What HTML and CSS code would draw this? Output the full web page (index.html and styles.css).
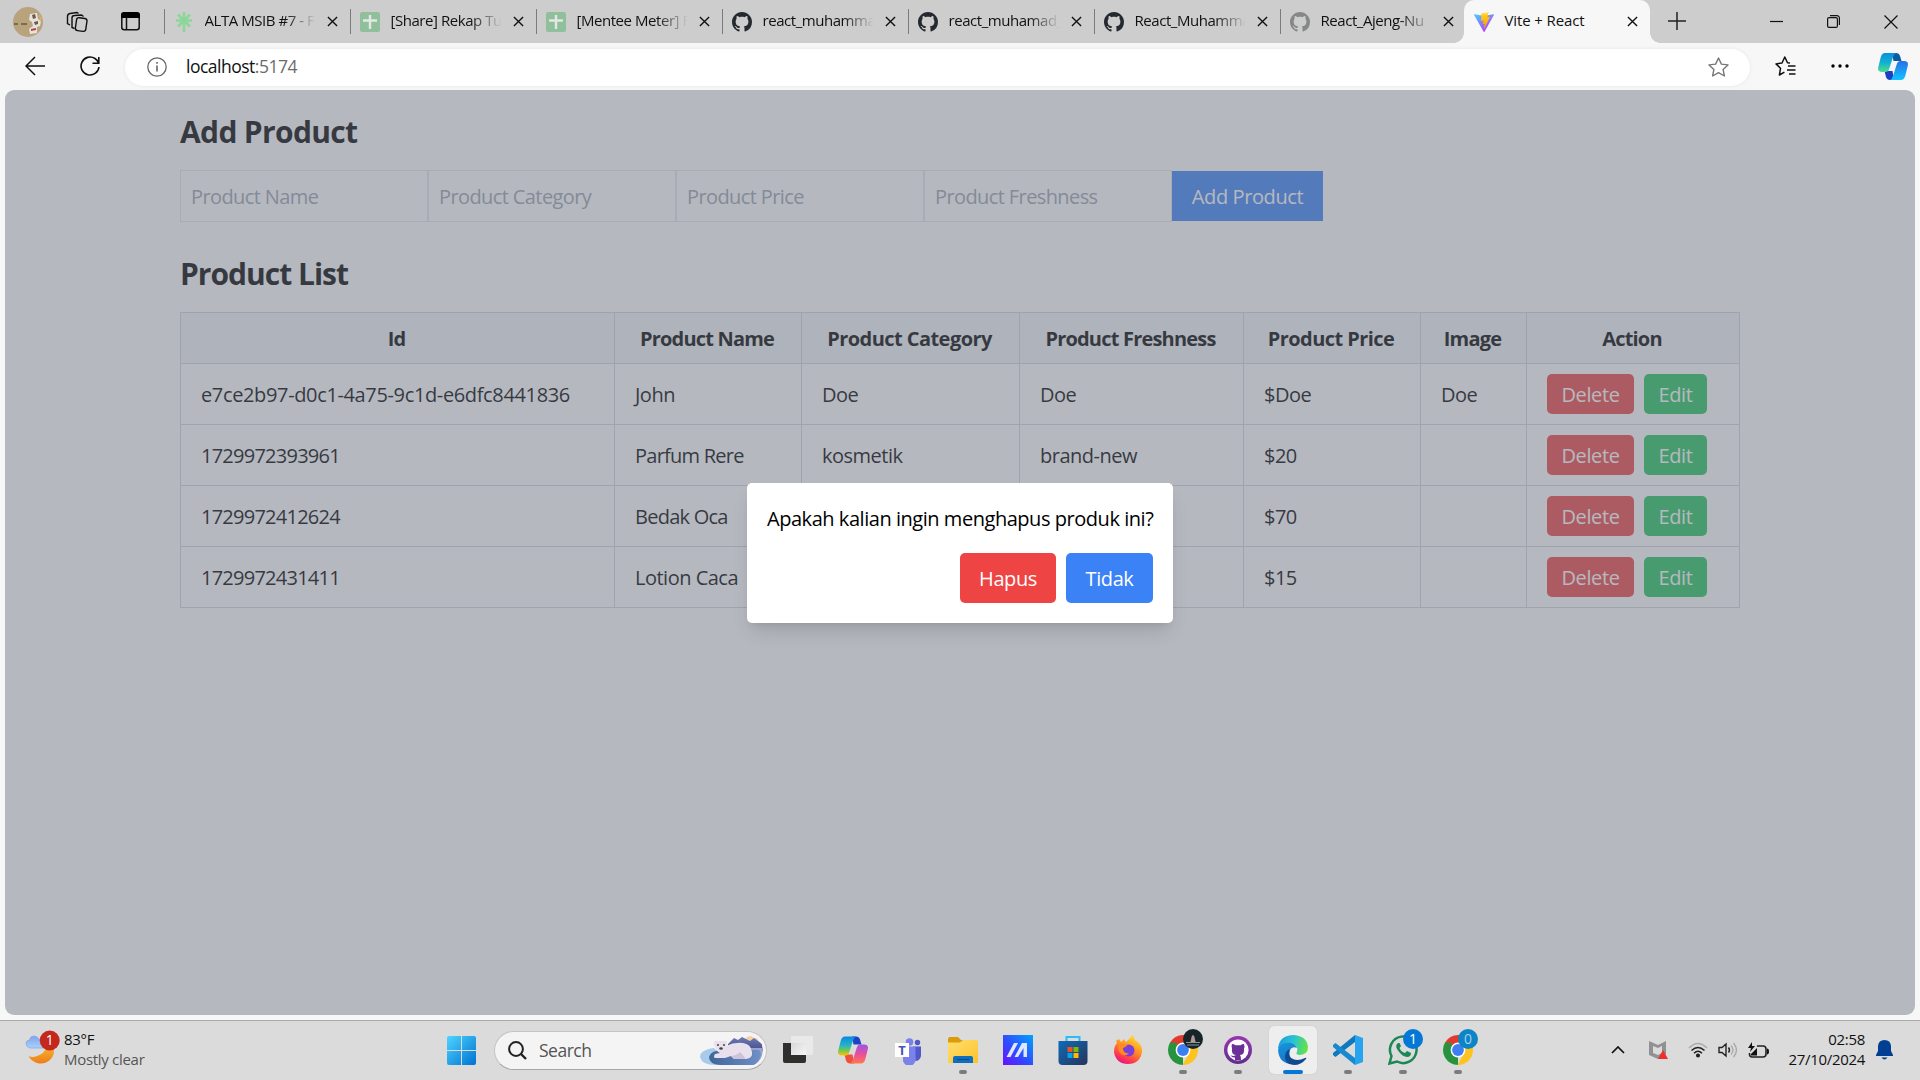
FILE: index.html
```html
<!DOCTYPE html>
<html lang="id">
<head>
<meta charset="utf-8">
<title>Vite + React</title>
<link rel="stylesheet" href="styles.css">
</head>
<body>
<svg class="defs" width="0" height="0" aria-hidden="true">
  <defs>
    <linearGradient id="gStart" x1="0" y1="0" x2="1" y2="1"><stop offset="0" stop-color="#4fd4ff"/><stop offset="1" stop-color="#0072d2"/></linearGradient>
    <linearGradient id="gVite" x1="0" y1="0" x2=".7" y2="1"><stop offset="0" stop-color="#41d1ff"/><stop offset="1" stop-color="#bd34fe"/></linearGradient>
    <linearGradient id="gBolt" x1="0" y1="0" x2="0" y2="1"><stop offset="0" stop-color="#ffea83"/><stop offset=".2" stop-color="#ffcb1c"/><stop offset="1" stop-color="#ff9800"/></linearGradient>
    <linearGradient id="gCopA" x1="0" y1="0" x2="0" y2="1"><stop offset="0" stop-color="#0f86e4"/><stop offset=".45" stop-color="#22b3c9"/><stop offset=".75" stop-color="#7ac84a"/><stop offset="1" stop-color="#ffc400"/></linearGradient>
    <linearGradient id="gCopB" x1="0" y1="0" x2="0" y2="1"><stop offset="0" stop-color="#9c53e6"/><stop offset=".55" stop-color="#ee5097"/><stop offset="1" stop-color="#ff7a4a"/></linearGradient>
    <linearGradient id="gCopC" x1="0" y1="0" x2="0" y2="1"><stop offset="0" stop-color="#0a8fe0"/><stop offset=".5" stop-color="#12b0d0"/><stop offset="1" stop-color="#4ede8f"/></linearGradient>
    <linearGradient id="gCopD" x1="0" y1="0" x2="0" y2="1"><stop offset="0" stop-color="#2a6fe6"/><stop offset="1" stop-color="#12c4ff"/></linearGradient>
    <linearGradient id="gMoon" x1="0" y1="0" x2="0" y2="1"><stop offset="0" stop-color="#f7b52e"/><stop offset="1" stop-color="#ee7d1b"/></linearGradient>
    <linearGradient id="gCloud" x1="0" y1="0" x2="0" y2="1"><stop offset="0" stop-color="#7fa5ee"/><stop offset="1" stop-color="#a9d0fb"/></linearGradient>
    <linearGradient id="gFolder" x1="0" y1="0" x2="1" y2="1"><stop offset="0" stop-color="#ffdf70"/><stop offset="1" stop-color="#fcc22a"/></linearGradient>
    <linearGradient id="gAsus" x1="1" y1="0" x2="0" y2="1"><stop offset="0" stop-color="#00a2ff"/><stop offset=".55" stop-color="#2f4bff"/><stop offset="1" stop-color="#6a10ff"/></linearGradient>
    <linearGradient id="gStore" x1="0" y1="0" x2="1" y2="1"><stop offset="0" stop-color="#0d6cb8"/><stop offset="1" stop-color="#27335c"/></linearGradient>
    <linearGradient id="gFox" x1=".8" y1="0" x2=".3" y2="1"><stop offset="0" stop-color="#ffe53b"/><stop offset=".45" stop-color="#ff9422"/><stop offset=".8" stop-color="#ff3750"/><stop offset="1" stop-color="#e31587"/></linearGradient>
    <linearGradient id="gGit" x1="0" y1="0" x2="0" y2="1"><stop offset="0" stop-color="#9a35b0"/><stop offset="1" stop-color="#5f2f8e"/></linearGradient>
    <linearGradient id="gEdgeT" x1="0" y1=".3" x2="1" y2=".5"><stop offset="0" stop-color="#1b9de2"/><stop offset=".5" stop-color="#2cc3d0"/><stop offset="1" stop-color="#66e344"/></linearGradient>
    <linearGradient id="gEdgeL" x1="0" y1="0" x2=".4" y2="1"><stop offset="0" stop-color="#1a94dd"/><stop offset="1" stop-color="#1476c8"/></linearGradient>
    <linearGradient id="gGlass" x1="0" y1="0" x2="1" y2="1"><stop offset="0" stop-color="#d4d4d4"/><stop offset="1" stop-color="#fafafa"/></linearGradient>
    <linearGradient id="gHill" x1="0" y1="0" x2="0" y2="1"><stop offset="0" stop-color="#6d7bb4"/><stop offset="1" stop-color="#434d8e"/></linearGradient>
    <linearGradient id="gWater" x1="0" y1="0" x2="1" y2="0"><stop offset="0" stop-color="#3f6699"/><stop offset="1" stop-color="#6f8fc8"/></linearGradient>
  </defs>
  <symbol id="close" viewBox="0 0 12 12"><path d="M1 1l10 10M11 1L1 11" fill="none" stroke="#111" stroke-width="1.5"/></symbol>
  <symbol id="sheet" viewBox="0 0 20 20"><rect width="20" height="20" rx="2" fill="#8fbf9b"/><path d="M10 3v14M3 8.5h14" stroke="#e4e8e5" stroke-width="2.4"/></symbol>
  <symbol id="github" viewBox="0 0 16 16"><path d="M8 0C3.58 0 0 3.58 0 8c0 3.54 2.29 6.53 5.47 7.59.4.07.55-.17.55-.38 0-.19-.01-.82-.01-1.49-2.01.37-2.53-.49-2.69-.94-.09-.23-.48-.94-.82-1.13-.28-.15-.68-.52-.01-.53.63-.01 1.08.58 1.23.82.72 1.21 1.87.87 2.33.66.07-.52.28-.87.51-1.07-1.78-.2-3.64-.89-3.64-3.95 0-.87.31-1.59.82-2.15-.08-.2-.36-1.02.08-2.12 0 0 .67-.21 2.2.82.64-.18 1.32-.27 2-.27s1.36.09 2 .27c1.53-1.04 2.2-.82 2.2-.82.44 1.1.16 1.92.08 2.12.51.56.82 1.27.82 2.15 0 3.07-1.87 3.75-3.65 3.95.29.25.54.73.54 1.48 0 1.07-.01 1.93-.01 2.2 0 .21.15.46.55.38A8.01 8.01 0 0 0 16 8c0-4.42-3.58-8-8-8z"/></symbol>
  <symbol id="chrome" viewBox="0 0 30 30">
    <path d="M15 15L2.01 7.5A15 15 0 0 1 27.99 7.5z" fill="#e23a2e"/>
    <path d="M15 15L15 30A15 15 0 0 1 2.01 7.5z" fill="#27933f"/>
    <path d="M21 18.5L14.5 30A15 15 0 0 0 28.3 8H15z" fill="#fdc31e"/>
    <path d="M9 18.5L2 7.5 9 8z" fill="#27933f"/>
    <circle cx="15" cy="15" r="7.4" fill="#fff"/><circle cx="15" cy="15" r="5.9" fill="#3c7ff0"/>
  </symbol>
</svg>

<header class="tabs">
  <div class="tabs-tools">
    <svg width="30" height="30" viewBox="0 0 30 30"><circle cx="15" cy="15" r="15" fill="#b9a37d"/><path d="M17 7l7-1 1 6 3 2-1 5-3 1v6l-7 1-1-5 4-3-1-4-3-2z" fill="#e4e3df"/><path d="M19 8l3-1 1 4-3 1zM21 15l4-1v3l-3 1z" fill="#6c5a45"/><path d="M26 7l3 5-2 3z" fill="#d9b45c"/><path d="M18 22l5-1v2l-5 1z" fill="#b5433c"/><path d="M1 17h4M8 17h6" stroke="#6a5a3c" stroke-width="1.300"/></svg>
    <svg width="22" height="22" viewBox="0 0 22 22" fill="none" stroke="#111" stroke-width="1.400"><rect x="10" y="7" width="10.500" height="13" rx="2.500" transform="rotate(8 15 13)"/><path d="M8.500 17.500L6 16.500V7a2.500 2.500 0 0 1 2.500-2.500l7-.5 2 1.500M4 14L1.500 12.500V5.500A3 3 0 0 1 4 2.500l7-1 1.500 1"/></svg>
    <svg width="19" height="19" viewBox="0 0 19 19"><rect x=".8" y="1.200" width="17.400" height="16.500" rx="2.500" fill="none" stroke="#111" stroke-width="1.500"/><path d="M0 6V3a3 3 0 0 1 3-3h13a3 3 0 0 1 3 3v3z"/><path d="M5.500 6v12" stroke="#111" stroke-width="1.500"/></svg>
  </div>
  <div class="tab"><svg class="fav" viewBox="0 0 20 20"><path d="M10 0v20M2 8.500h16M4 2.500l12 12M16 2.500l-12 12" stroke="#8bd79b" stroke-width="2.700"/></svg><span class="title">ALTA MSIB #7 - F</span><svg class="x"><use href="#close"/></svg></div>
  <div class="tab"><svg class="fav"><use href="#sheet"/></svg><span class="title">[Share] Rekap Tu</span><svg class="x"><use href="#close"/></svg></div>
  <div class="tab"><svg class="fav"><use href="#sheet"/></svg><span class="title">[Mentee Meter] F</span><svg class="x"><use href="#close"/></svg></div>
  <div class="tab"><svg class="fav gh"><use href="#github"/></svg><span class="title">react_muhamma</span><svg class="x"><use href="#close"/></svg></div>
  <div class="tab"><svg class="fav gh"><use href="#github"/></svg><span class="title">react_muhamad_</span><svg class="x"><use href="#close"/></svg></div>
  <div class="tab"><svg class="fav gh"><use href="#github"/></svg><span class="title">React_Muhamma</span><svg class="x"><use href="#close"/></svg></div>
  <div class="tab last"><svg class="fav gh pale"><use href="#github"/></svg><span class="title">React_Ajeng-Nu</span><svg class="x"><use href="#close"/></svg></div>
  <div class="tab active"><svg class="fav" viewBox="0 0 256 257"><path fill="url(#gVite)" d="M255.153 37.938L134.897 252.976c-2.483 4.44-8.862 4.466-11.382.048L.875 37.958c-2.746-4.814 1.371-10.646 6.827-9.67l120.385 21.517a6.537 6.537 0 0 0 2.322-.004l117.867-21.483c5.438-.991 9.574 4.796 6.877 9.62Z"/><path fill="url(#gBolt)" d="M185.432.063L96.44 17.501a3.268 3.268 0 0 0-2.634 3.014l-5.474 92.456a3.268 3.268 0 0 0 3.997 3.378l24.777-5.718c2.318-.535 4.413 1.507 3.936 3.838l-7.361 36.047c-.495 2.426 1.782 4.5 4.151 3.78l15.304-4.649c2.372-.72 4.652 1.36 4.15 3.788l-11.698 56.621c-.732 3.542 3.979 5.473 5.943 2.437l1.313-2.028l72.516-144.72c1.215-2.423-.88-5.186-3.54-4.672l-25.505 4.922c-2.396.462-4.435-1.77-3.759-4.114l16.646-57.705c.677-2.35-1.37-4.583-3.769-4.113Z"/></svg><span class="title">Vite + React</span><svg class="x"><use href="#close"/></svg></div>
  <svg class="plus" width="18" height="18" viewBox="0 0 18 18"><path d="M9 0v18M0 9h18" stroke="#222" stroke-width="1.500"/></svg>
  <div class="window-buttons">
    <svg width="13" height="13" viewBox="0 0 13 13"><path d="M0 6.500h13" stroke="#111" stroke-width="1.200"/></svg>
    <svg width="13" height="13" viewBox="0 0 13 13" fill="none" stroke="#111" stroke-width="1.200"><rect x=".6" y="2.600" width="9.800" height="9.800" rx="1.500"/><path d="M3 .6h7a2.400 2.400 0 0 1 2.400 2.400v7"/></svg>
    <svg width="14" height="14" viewBox="0 0 14 14"><path d="M.5.5l13 13M13.500.5L.5 13.500" stroke="#111" stroke-width="1.200"/></svg>
  </div>
</header>

<nav class="toolbar">
  <svg width="20" height="20" viewBox="0 0 20 20" fill="none" stroke="#111" stroke-width="1.500"><path d="M20 10H1M10 1L1 10l9 9"/></svg>
  <svg class="reload" width="20" height="20" viewBox="0 0 20 20" fill="none" stroke="#111" stroke-width="1.600"><path d="M19 11A9 9 0 1 1 15 2.500Q17.500 4 18.500 7M18.800 1v6.300h-6.300"/></svg>
  <div class="address">
    <svg width="20" height="20" viewBox="0 0 20 20" fill="none" stroke="#666" stroke-width="1.300"><circle cx="10" cy="10" r="9.200"/><path d="M10 8.500v6M10 5v1.700" stroke-width="1.600"/></svg>
    <span class="url">localhost<span class="port">:5174</span></span>
    <svg width="21" height="20" viewBox="0 0 21 20"><path d="M10.500 1l2.900 6.100 6.600.8-4.900 4.500 1.300 6.600-5.900-3.300L4.600 19l1.300-6.600L1 7.900l6.600-.8z" fill="none" stroke="#777" stroke-width="1.400" stroke-linejoin="round"/></svg>
  </div>
  <svg class="favs" width="21" height="20" viewBox="0 0 21 20" fill="none" stroke="#111" stroke-width="1.500" stroke-linejoin="round"><path d="M15 7l-2.500-.2L9.800 1 7 7l-6 .9 4.500 4.400L4.400 19l5-2.800M13 10h7.500M12 14h8.500M14 18h6.500"/></svg>
  <svg class="dots" width="18" height="4" viewBox="0 0 18 4"><circle cx="2" cy="2" r="1.700"/><circle cx="9" cy="2" r="1.700"/><circle cx="16" cy="2" r="1.700"/></svg>
  <svg class="copilot" width="30" height="27" viewBox="0 0 30 27"><path d="M14 0h4q3 0 4 3l1.500 5h-8z" fill="#0a5c9e"/><path d="M16 27h-4q-3 0-4-3l-1.500-6h8z" fill="#1c3fc4"/><path d="M7 0h11q-2 1-3 4l-3.500 11q-1 4-4 4H4q-5 0-3.700-5l2.200-9Q3.700 0 7 0z" fill="url(#gCopC)"/><path d="M23 27H12q2-1 3-4l3.500-11q1-4 4-4H26q5 0 3.700 5l-2.200 9q-1.200 5-4.500 5z" fill="url(#gCopD)"/></svg>
</nav>

<main class="page">
  <div class="container">
    <h1>Add Product</h1>
    <form class="product-form">
      <input placeholder="Product Name"><input placeholder="Product Category"><input placeholder="Product Price"><input placeholder="Product Freshness">
      <button type="button" class="add">Add Product</button>
    </form>
    <h1 class="list-title">Product List</h1>
    <table>
      <colgroup><col class="c-id"><col class="c-name"><col class="c-cat"><col class="c-fresh"><col class="c-price"><col class="c-image"><col></colgroup>
      <thead><tr><th>Id</th><th>Product Name</th><th class="wide">Product Category</th><th>Product Freshness</th><th class="wide">Product Price</th><th>Image</th><th>Action</th></tr></thead>
      <tbody>
        <tr><td class="uuid">e7ce2b97-d0c1-4a75-9c1d-e6dfc8441836</td><td>John</td><td>Doe</td><td>Doe</td><td>$Doe</td><td>Doe</td><td><div class="actions"><button class="delete">Delete</button><button class="edit">Edit</button></div></td></tr>
        <tr><td class="num">1729972393961</td><td class="tight">Parfum Rere</td><td>kosmetik</td><td>brand-new</td><td>$20</td><td></td><td><div class="actions"><button class="delete">Delete</button><button class="edit">Edit</button></div></td></tr>
        <tr><td class="num">1729972412624</td><td class="tight">Bedak Oca</td><td></td><td></td><td>$70</td><td></td><td><div class="actions"><button class="delete">Delete</button><button class="edit">Edit</button></div></td></tr>
        <tr><td class="num">1729972431411</td><td>Lotion Caca</td><td></td><td></td><td>$15</td><td></td><td><div class="actions"><button class="delete">Delete</button><button class="edit">Edit</button></div></td></tr>
      </tbody>
    </table>
  </div>
  <div class="overlay">
    <div class="modal">
      <p>Apakah kalian ingin menghapus produk ini?</p>
      <div class="modal-actions"><button class="yes">Hapus</button><button class="no">Tidak</button></div>
    </div>
  </div>
</main>

<footer class="taskbar">
  <div class="weather">
    <svg width="35" height="36" viewBox="0 0 35 36"><path d="M3.500 26Q7 28 12 26q8-3 9-8l7-2Q31 24 25 30q-6 5-13 3-6-2-8.500-7z" fill="url(#gMoon)"/><path d="M5 18q-4-1-4-4.500Q1 10 4.500 10 5 6 9 6q3 0 5 3 5 0 5 9z" fill="url(#gCloud)" stroke="#7aa0e8" stroke-width=".6"/><circle cx="24.700" cy="10.500" r="10" fill="#c4281c"/><text x="24.700" y="15.300" text-anchor="middle" class="badge-text">1</text></svg>
    <div class="lines"><span>83°F</span><span class="dim">Mostly clear</span></div>
  </div>
  <svg class="start" width="29" height="29" viewBox="0 0 29 29"><path d="M0 2Q0 0 2 0h12v14H0zM15 0h12q2 0 2 2v12H15zM0 15h14v14H2q-2 0-2-2zM15 15h14v12q0 2-2 2H15z" fill="url(#gStart)"/></svg>
  <div class="search">
    <svg width="19" height="19" viewBox="0 0 19 19" fill="none" stroke="#222"><circle cx="8" cy="8" r="6.900" stroke-width="2"/><path d="M13 13l5 5" stroke-width="2.400"/></svg>
    <span>Search</span>
    <svg class="bear" width="63" height="31" viewBox="0 0 63 31"><path d="M46 3q4-4 8 0h3l4 8v8H40z" fill="#f6cfa4"/><path d="M28 9l6-6 4 2 4-3 8 4 4-3 8 6 1 7H28z" fill="url(#gHill)"/><path d="M28 13h35q0 12-8 17H30z" fill="#9da3c6"/><path d="M14 13Q0 15 0 22q2 8 15 8h10l-6-12z" fill="#a8cbea"/><path d="M9 22q2-7 14-7h36q5 5-4 15H20Q9 29 9 22z" fill="url(#gWater)"/><path d="M16 13q-3-3-2-6 1-2 3-1h6q3-1 4 1 0 2-1 4 8-4 17-3 8 1 9 9 1 6-6 7H34q-2-2-3-3l-6 2H15q-2-1 0-4l5-1q-4-2-4-5z" fill="#e9e0ee"/><path d="M31 21q6-1 9-4 6 6 5 7H34z" fill="#cfc3dc"/><circle cx="18" cy="10" r=".9" fill="#333"/><circle cx="24" cy="10" r=".9" fill="#333"/><ellipse cx="21" cy="13.500" rx="1.800" ry="1.200" fill="#444"/></svg>
  </div>
  <div class="apps">
    <div class="app"><svg viewBox="0 0 30 30"><path d="M0 8h23v18q0 2-2 2H2q-2 0-2-2z" fill="#2f2f2e"/><path d="M8 1h22v17q0 2-2 2H8z" fill="#e9e9e9"/><path d="M8 8h15v12H8z" fill="url(#gGlass)" opacity=".8"/></svg></div>
    <div class="app"><svg viewBox="0 0 30 27"><path d="M14 0h4q3 0 4 3l1.500 5h-8z" fill="#1c42c8"/><path d="M16 27h-4q-3 0-4-3l-1.500-6h8z" fill="#f0503c"/><path d="M7 0h11q-2 1-3 4l-3.500 11q-1 4-4 4H4q-5 0-3.700-5l2.200-9Q3.700 0 7 0z" fill="url(#gCopA)"/><path d="M23 27H12q2-1 3-4l3.500-11q1-4 4-4H26q5 0 3.700 5l-2.200 9q-1.200 5-4.500 5z" fill="url(#gCopB)"/></svg></div>
    <div class="app"><svg viewBox="0 0 30 30"><circle cx="16.500" cy="7" r="3.800" fill="#7b83eb"/><circle cx="24.500" cy="7.500" r="2.700" fill="#5059c9"/><path d="M20 11.500h8V21q-1 5-6 5z" fill="#5059c9"/><path d="M10 11.500h12.500V22a6.500 7 0 0 1-12.500 4z" fill="#7b83eb"/><rect x="2" y="8" width="14" height="14" fill="#fff"/><text x="9" y="19.500" text-anchor="middle" class="teams-text">T</text></svg></div>
    <div class="app run"><svg viewBox="0 0 30 30"><path d="M0 4q0-2 2-2h8l3 3h15v8H0z" fill="#dd9a0a"/><path d="M0 7.500h12L15 5h13q2 0 2 2v21H0z" fill="url(#gFolder)"/><path d="M5 28v-5q0-2 2-2h16q2 0 2 2v5z" fill="#0f6fbe"/><path d="M9 24.500h12" stroke="#064a86" stroke-width="1"/></svg></div>
    <div class="app"><svg viewBox="0 0 30 30"><path d="M0 0h30v30H0z" fill="url(#gAsus)"/><path d="M3.500 22L11 8h4L7.500 22zM11.500 22L19 8h5v14h-3.500V13L15 22z" fill="#dce8ff"/></svg></div>
    <div class="app"><svg viewBox="0 0 30 30"><path d="M8.500 7V2h13v5" fill="none" stroke="#29bdf2" stroke-width="2"/><path d="M.5 6h29v20q0 4-4 4h-21q-4 0-4-4z" fill="url(#gStore)"/><path d="M9.500 12h5v5h-5z" fill="#f25022"/><path d="M15.500 12h5v5h-5z" fill="#7fba00"/><path d="M9.500 18h5v5h-5z" fill="#00a4ef"/><path d="M15.500 18h5v5h-5z" fill="#ffb900"/></svg></div>
    <div class="app"><svg viewBox="0 0 30 30"><path d="M3 6l3-2 2 3 3-3 2 3 5-5 2-2 2 5q8 5 7 12-2 12-14 12T1 17q0-6 3-9z" fill="url(#gFox)"/><circle cx="15.500" cy="15.500" r="6" fill="#7a3fd8"/><path d="M6 9q7-1 8 2l-4 2q0 6 6 5-3 4-8 1-4-4-2-10z" fill="#ff8a1e"/></svg></div>
    <div class="app run"><svg><use href="#chrome"/></svg><svg class="badge" viewBox="0 0 20 20"><circle cx="10" cy="10" r="10" fill="#17242a"/><path d="M8.500 8q1.500-4 3 0l1 5h-5z" fill="#b39a94"/><path d="M3 13.500h14M4 16h12" stroke="#87949a" stroke-width="1.200"/></svg></div>
    <div class="app run"><svg viewBox="0 0 30 30"><circle cx="15" cy="15" r="14" fill="url(#gGit)"/><circle cx="15" cy="15" r="10.600" fill="#fff"/><path d="M9 9q2 0 3.500 1.200h5Q19 9 21 9q1 3 0 4.500 1 6-4 6.500 1 1 1 5h-6v-2.500q-3 .5-4.500-2.500 2.500 1.500 4.500.5l1-.5q-5-.5-4-6.500-1-2 0-4.500z" fill="#6b2f96"/></svg></div>
    <div class="app run current"><svg viewBox="0 0 30 30"><path d="M0 14Q1 0 16 0q13 1 14 12 0 8-9 8-4-1-2-3 2-6-5-7.500Q4 8 0 14z" fill="url(#gEdgeT)"/><path d="M0 15q1-6 8-7 8-1 11 5-5-2-7 2-2 7 5 14Q1 30 0 15z" fill="url(#gEdgeL)"/><path d="M12 14q-3 5 1 9 6 4 14 0 2-1 1 1-5 6-12 6-9-1-9-8 0-6 5-8z" fill="#114a91"/></svg></div>
    <div class="app run"><svg viewBox="0 0 30 30"><path d="M22 7L2.500 22 0 20v-2L22 0z" fill="#0f79bd"/><path d="M22 23L2.500 8 0 10v2l22 18z" fill="#1888d0"/><path d="M22 0l8 3v24l-8 3z" fill="#26a4ef"/></svg></div>
    <div class="app run"><svg viewBox="0 0 30 30"><path d="M1.500 28.500l2-7.500A13.300 13.300 0 1 1 9 26.500z" fill="none" stroke="#1a8754" stroke-width="2.500"/><path d="M10 8q-3 2-1 6 4 7 10 8 4 0 4-4l-4-2-2 2q-4-1-5.500-5l1.500-2-1.500-3z" fill="#1a8754"/></svg><svg class="badge" viewBox="0 0 20 20"><circle cx="10" cy="10" r="10" fill="#0578d6"/><text x="10" y="15" text-anchor="middle" class="badge-text">1</text></svg></div>
    <div class="app run"><svg><use href="#chrome"/></svg><svg class="badge" viewBox="0 0 20 20"><circle cx="10" cy="10" r="10" fill="#0d84c6"/><text x="10" y="14.500" text-anchor="middle" class="badge-text soft">0</text></svg></div>
  </div>
  <div class="tray">
    <svg width="14" height="8" viewBox="0 0 14 8"><path d="M1 7l6-6 6 6" fill="none" stroke="#111" stroke-width="1.700"/></svg>
    <svg class="shield" width="19" height="20" viewBox="0 0 19 20"><path d="M0 1l9 4 8-4v13l-8 5-9-4zM4 6v7l5 2 4-2V6l-4 2z" fill="#8f9193" fill-rule="evenodd"/><path d="M14 10l5 9H9z" fill="#ee2f2c"/></svg>
    <svg class="wifi" width="20" height="16" viewBox="0 0 20 16" fill="none" stroke="#222" stroke-width="1.500"><path d="M1 6q9-9 18 0" stroke="#aaa"/><path d="M3.500 8.500q6.500-6 13 0M6 11.200q4-4 8 0"/><circle cx="10" cy="13.500" r="1.300" fill="#222"/></svg>
    <svg class="sound" width="20" height="16" viewBox="0 0 20 16" fill="none" stroke="#222" stroke-width="1.400"><path d="M1 5.500h3L8 2v12l-4-3.500H1zM10.500 5.500q2 2.500 0 5"/><path d="M13 3.500q4 4.500 0 9M15.500 1q6 7 0 14" stroke="#aaa"/></svg>
    <svg class="battery" width="21" height="17" viewBox="0 0 21 17"><path d="M9 4h6q3 0 3 3v5q0 3-3 3H4q-2.500 0-2.500-3V11" fill="none" stroke="#222" stroke-width="1.600"/><path d="M3 13.500V12l6-6v7.500zM4 0L0 6h3l-1 4 5-6H4zM19 6.500q2 0 2 3t-2 3z" fill="#111"/></svg>
    <div class="clock"><span>02:58</span><span>27/10/2024</span></div>
    <svg class="bell" width="17" height="20" viewBox="0 0 17 20"><path d="M8.500 0q6 0 6.500 6v5l2 4v1H0v-1l2-4V6q.5-6 6.500-6zM5.500 17.500h6q-3 4-6 0z" fill="#003f92"/></svg>
  </div>
</footer>
</body>
</html>
```

FILE: styles.css
```css
* { box-sizing: border-box; }
html, body { height: 100%; overflow: hidden; }
body {
  margin: 0;
  display: flex;
  flex-direction: column;
  background: #f7f7f7;
  font-family: "Open Sans", "Noto Sans", sans-serif;
  color: #111;
}
svg { display: block; flex: none; }
.defs { position: absolute; }
button, input { font: inherit; letter-spacing: inherit; border: 0; margin: 0; }

/* tab strip */
.tabs { height: 43px; flex: none; display: flex; background: #cdcdcd; align-items: center; }
.tabs-tools { width: 164px; display: flex; align-items: center; padding-left: 13px; flex: none; }
.tabs-tools svg:nth-child(2) { margin-left: 23px; }
.tabs-tools svg:nth-child(3) { margin-left: 33px; }
.tab {
  position: relative;
  width: 186px;
  height: 43px;
  flex: none;
  display: flex;
  align-items: center;
  padding-left: 9.500px;
}
.tab.last { width: 184px; }
.tab::before { content: ""; position: absolute; left: 0; top: 9px; width: 1px; height: 25px; background: #7b7b7b; }
.fav { width: 20px; height: 20px; }
.gh { fill: #24292f; }
.pale { fill: #858789; }
.title {
  width: 114px;
  margin-left: 11px;
  padding-bottom: 3px;
  white-space: nowrap;
  font-size: 15px;
  letter-spacing: -.45px;
  -webkit-mask-image: linear-gradient(90deg, #000 70%, transparent 97%);
  mask-image: linear-gradient(90deg, #000 70%, transparent 97%);
}
.x { width: 11px; height: 11px; margin-left: 8px; }
.active { background: #f7f7f7; border-radius: 10px 10px 0 0; }
.active .title { -webkit-mask-image: none; mask-image: none; letter-spacing: -.12px; }
.active::before, .active::after {
  content: "";
  position: absolute;
  top: 33px;
  left: -10px;
  width: 10px;
  height: 10px;
  background: radial-gradient(circle at 0 0, transparent 9.500px, #f7f7f7 10px);
}
.active::after { left: auto; right: -10px; background: radial-gradient(circle at 100% 0, transparent 9.500px, #f7f7f7 10px); }
.plus { margin-left: 18px; margin-bottom: 2px; }
.window-buttons { margin-left: auto; display: flex; gap: 44px; padding-right: 22px; }

/* toolbar */
.toolbar { height: 47px; flex: none; display: flex; align-items: center; padding: 0 12px 1px 25px; }
.reload { margin-left: 35px; }
.address {
  width: 1625px;
  height: 37px;
  margin: 2px 0 0 25px;
  display: flex;
  align-items: center;
  padding: 0 21px 0 22px;
  border-radius: 19px;
  background: #fff;
  box-shadow: 0 0 4px rgba(0, 0, 0, .07);
}
.url { flex: 1; margin-left: 19px; padding-bottom: 2px; font-size: 17.500px; letter-spacing: -.5px; }
.port { color: #6b6b6b; }
.favs { margin-left: 25px; }
.dots { margin-left: 35px; }
.copilot { margin-left: auto; }

/* page */
.page {
  position: relative;
  height: 925px;
  flex: none;
  margin: 0 5px 5px;
  border-radius: 9px;
  overflow: hidden;
  background: #fff;
  color: #000;
  font-size: 20px;
  letter-spacing: -.5px;
}
.container { width: 1560px; margin: 0 auto; padding-top: 21px; }
h1 { margin: 0 0 19px; padding-top: 1px; font-size: 30px; line-height: 39px; font-weight: 700; letter-spacing: -.65px; }
.list-title { letter-spacing: -1px; }
.product-form { display: flex; align-items: center; margin-bottom: 31px; }
.product-form input { width: 248px; height: 52px; padding: 1px 10px 0; border: 1px solid #e5e7eb; background: #fff; letter-spacing: -.6px; }
.product-form input::placeholder { color: #9ca3af; opacity: 1; }
.add { width: 151px; height: 50px; padding: 1px 0 0; background: #3b82f6; color: #fff; letter-spacing: -.4px; }
table { width: 1560px; table-layout: fixed; border-collapse: collapse; }
.c-id { width: 434px; }
.c-name { width: 187px; }
.c-cat { width: 218px; }
.c-fresh { width: 224px; }
.c-price { width: 177px; }
.c-image { width: 106px; }
th, td { border: 1px solid #d1d5db; padding: 2px 20px 0; line-height: 30px; white-space: nowrap; text-align: left; }
th { height: 51px; padding: 2px 2px 0 0; background: #f3f4f6; text-align: center; letter-spacing: -.8px; }
.wide { letter-spacing: -.55px; }
td { height: 61px; }
td:last-child { padding-top: 0; }
.uuid { letter-spacing: -.36px; }
.num, .tight { letter-spacing: -.75px; }
.actions { display: flex; gap: 10px; }
.actions button { height: 40px; padding: 1px 0 0; border-radius: 5px; color: #fff; letter-spacing: -.4px; }
.delete { width: 87px; background: #ef4444; }
.edit { width: 63px; background: #22c55e; }
.overlay {
  position: absolute;
  inset: 0;
  display: flex;
  align-items: center;
  justify-content: center;
  background: rgba(107, 114, 128, .5);
}
.modal {
  width: 426px;
  height: 140px;
  padding: 20px;
  border-radius: 5px;
  background: #fff;
  box-shadow: 0 12px 19px -4px rgba(0, 0, 0, .12), 0 5px 8px -5px rgba(0, 0, 0, .12);
}
.modal p { margin: 0 0 19px; padding-top: 1px; line-height: 30px; white-space: nowrap; letter-spacing: -.46px; }
.modal-actions { display: flex; justify-content: flex-end; gap: 10px; }
.modal-actions button { height: 50px; padding: 2px 0 0; border-radius: 5px; color: #fff; letter-spacing: -.4px; }
.yes { width: 96px; background: #ef4444; }
.no { width: 87px; background: #3b82f6; }

/* taskbar */
.taskbar { height: 60px; flex: none; display: flex; align-items: center; border-top: 1px solid #a9abaa; background: #dbdbdb; }
.weather { display: flex; width: 447px; padding: 0 0 3px 25px; flex: none; }
.lines, .clock { display: flex; flex-direction: column; font-size: 15px; line-height: 20px; letter-spacing: -.3px; white-space: nowrap; }
.lines { margin: -1px 0 0 4px; }
.dim { color: #555; }
.badge-text { font: 14px "Open Sans", sans-serif; fill: #fff; }
.soft { fill: #9fd3f0; }
.teams-text { font: 700 13px "Open Sans", sans-serif; fill: #4b53bc; }
.start { margin-bottom: 1px; }
.search {
  width: 273px;
  height: 39px;
  margin: 0 0 1px 18px;
  padding: 0 3px 0 13px;
  display: flex;
  align-items: center;
  flex: none;
  border: 1px solid #c4c4c4;
  border-bottom-color: #a5a5a5;
  border-radius: 20px;
  background: #f4f4f4;
  color: #555;
  font-size: 17.500px;
  letter-spacing: -.5px;
}
.search span { margin-left: 12px; }
.bear { margin-left: auto; border-radius: 0 15px 15px 0; }
.apps { display: flex; margin: 0 0 1px 3px; }
.app { position: relative; width: 55px; height: 48px; flex: none; display: flex; align-items: center; justify-content: center; }
.app > svg { width: 30px; height: 30px; }
.app > .badge { position: absolute; left: 28px; top: 3px; width: 20px; height: 20px; }
.run::after { content: ""; position: absolute; left: 23.500px; top: 44px; width: 8px; height: 4px; border-radius: 2px; background: #7c7c7c; }
.current::before { content: ""; position: absolute; left: 3.500px; top: 0; width: 48px; height: 48px; border-radius: 5px; background: #eee; box-shadow: 0 0 1px #aaa; }
.current > svg { position: relative; }
.current::after { left: 17.500px; width: 20px; background: #0578d6; }
.tray { margin-left: auto; display: flex; align-items: center; padding: 0 27px 1px 0; }
.shield { margin-left: 24px; }
.wifi { margin-left: 20px; }
.sound { margin-left: 10px; }
.battery { margin-left: 10px; }
.clock { width: 96px; align-items: flex-end; padding-bottom: 2px; }
.bell { margin-left: 11px; }
```
